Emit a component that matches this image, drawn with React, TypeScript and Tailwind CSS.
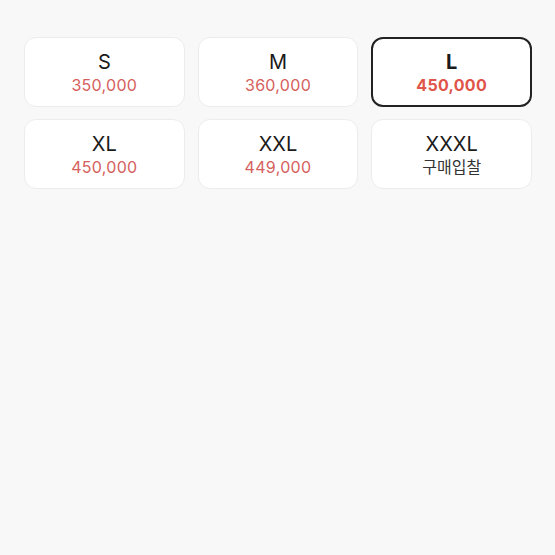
import React from "react";

const items = [
  { size: "S", price: "350,000" },
  { size: "M", price: "360,000" },
  { size: "L", price: "450,000", selected: true },
  { size: "XL", price: "450,000" },
  { size: "XXL", price: "449,000" },
  { size: "XXXL", price: "구매입찰", bid: true },
];

export default function App() {
  return (
    <div
      className="w-[555px] h-[555px] bg-[#f8f8f8] pl-6 pr-[23px] pt-[37px]"
      style={{ fontFamily: 'Inter, "Noto Sans CJK KR", sans-serif' }}
    >
      <div className="grid grid-cols-3 gap-x-[13px] gap-y-3">
        {items.map((it) => (
          <div
            key={it.size}
            className={
              it.selected
                ? "h-[70px] rounded-xl bg-white border-2 border-[#222] flex flex-col items-center justify-center pt-[2px]"
                : "h-[70px] rounded-xl bg-white border border-[#ececec] flex flex-col items-center justify-center pt-[2px]"
            }
          >
            <div
              className={
                it.selected
                  ? "text-[20px] leading-[24px] font-bold text-[#1a1a1a]"
                  : "text-[20px] leading-[24px] text-[#1a1a1a]"
              }
            >
              {it.size}
            </div>
            <div
              className={
                it.bid
                  ? "text-[16px] leading-[22px] text-[#333]"
                  : it.selected
                  ? "text-[16px] leading-[22px] font-bold text-[#e0554a] tracking-[0.3px]"
                  : "text-[16px] leading-[22px] text-[#d5605c] tracking-[0.3px]"
              }
            >
              {it.price}
            </div>
          </div>
        ))}
      </div>
    </div>
  );
}
